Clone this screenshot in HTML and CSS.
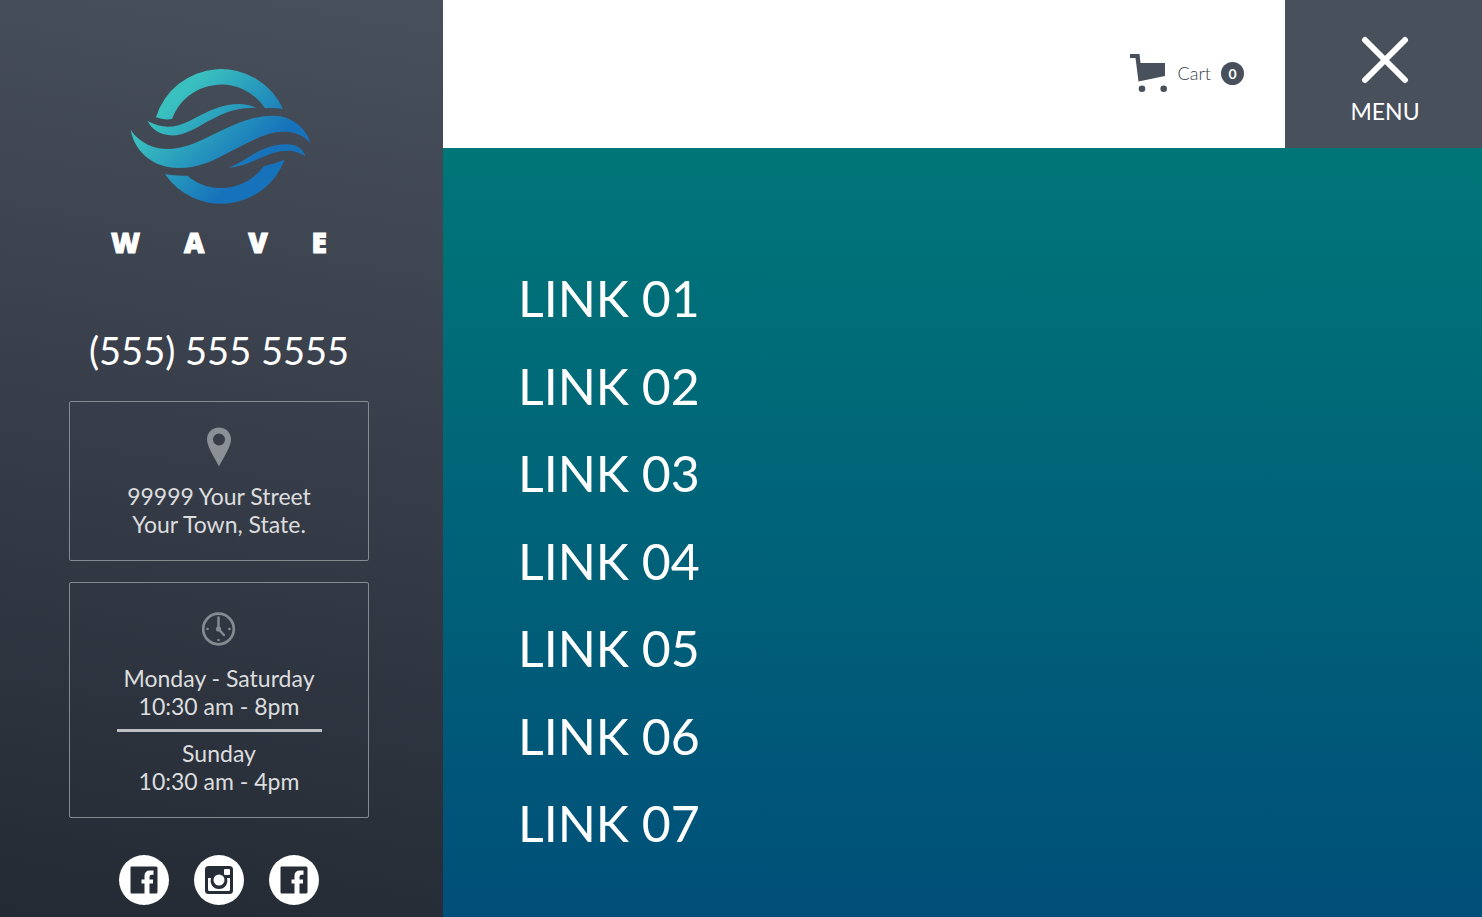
FILE: index.html
```html
<!DOCTYPE html>
<html lang="en">
<head>
    <meta charset="utf-8">
    <meta name="viewport" content="width=device-width, initial-scale=1">
    <title>Wave</title>
    <link rel="stylesheet" href="styles.css">
</head>
<body>
    <div class="page">
        <aside class="sidebar">
            <a href="#" class="logo">
                <svg class="logo-mark" viewBox="81 54 552 408" aria-hidden="true">
                    <defs>
                        <linearGradient id="wave" gradientUnits="userSpaceOnUse" x1="200" y1="180" x2="410" y2="390">
                            <stop offset="0" stop-color="#39c0bf"/>
                            <stop offset="1" stop-color="#1672bb"/>
                        </linearGradient>
                    </defs>
                    <g fill="url(#wave)">
                        <path d="M168 202A204 204 0 0 1 549 177Q522 173 495 175A157 157 0 0 0 216 207Q190 211 168 202Z"/>
                        <path d="M195 373A204 204 0 0 0 554 329Q525 341 491 349A157 157 0 0 1 262 377Q225 378 195 373Z"/>
                        <path d="M143 213C185 237 225 235 270 212C330 180 370 161 420 162Q450 164 468 173C420 172 380 182 320 216C270 245 245 258 210 256C180 254 155 238 143 213Z"/>
                        <path d="M92 240C120 280 160 297 205 297C270 297 330 255 400 226C440 208 480 197 520 197C575 198 615 230 632 279C605 252 580 245 550 245C500 245 450 275 400 300C340 332 300 354 235 354C165 354 105 310 92 240Z"/>
                        <path d="M386 353C440 335 480 283 560 283C590 283 608 295 616 319C590 300 565 300 540 304C480 318 450 347 386 353Z"/>
                    </g>
                </svg>
                <span class="logo-name"><span>W</span><span>A</span><span>V</span><span>E</span></span>
            </a>

            <a href="tel:5555555555" class="phone">(555) 555 5555</a>

            <div class="info-box address">
                <svg width="26" height="40" viewBox="0 0 26 40" aria-hidden="true">
                    <path fill="#8b8f96" fill-rule="evenodd" d="M13 0.500C6 0.500 1 5.500 1 12.500C1 19 7.500 29 13 39.500C18.500 29 25 19 25 12.500C25 5.500 20 0.500 13 0.500ZM13 6.500A6 6 0 1 1 13 18.500A6 6 0 1 1 13 6.500Z"/>
                </svg>
                <p>99999 Your Street<br>Your Town, State.</p>
            </div>

            <div class="info-box hours">
                <svg width="34" height="34" viewBox="0 0 34 34" aria-hidden="true">
                    <circle cx="16.500" cy="17" r="15.300" fill="none" stroke="#868b91" stroke-width="2.700"/>
                    <path d="M16.500 5.500V17L22 23" fill="none" stroke="#868b91" stroke-width="2.400" stroke-linecap="round"/>
                    <g fill="#868b91">
                        <circle cx="16.500" cy="17" r="2.600"/>
                        <circle cx="5.500" cy="17" r="1.300"/>
                        <circle cx="27.500" cy="17" r="1.300"/>
                        <circle cx="16.500" cy="28" r="1.300"/>
                    </g>
                </svg>
                <p>Monday - Saturday<br>10:30 am - 8pm</p>
                <hr>
                <p>Sunday<br>10:30 am - 4pm</p>
            </div>

            <div class="social">
                <a href="#" aria-label="Facebook">
                    <svg viewBox="0 0 50 50">
                        <path fill="#272d37" d="M12.500 11.500H37Q38.500 11.500 38.500 13V37Q38.500 38.500 37 38.500H30.500V28.500H34V24.500H30.500V22Q30.500 19.800 32.500 19.800H34.500V15.500H31Q25.500 15.500 25.500 21V24.500H22.500V28.500H25.500V38.500H12.500Q11.500 38.500 11.500 37V12.500Q11.500 11.500 12.500 11.500Z"/>
                    </svg>
                </a>
                <a href="#" aria-label="Instagram">
                    <svg viewBox="0 0 50 50">
                        <rect x="11" y="11" width="28" height="28" rx="3.500" fill="#272d37"/>
                        <path fill="#fff" d="M14 23H17C15.500 29 19 34 25 34S34.500 29 33 23H36V34.500Q36 36 34.500 36H15.500Q14 36 14 34.500Z"/>
                        <circle cx="25" cy="25" r="5.500" fill="#fff"/>
                        <rect x="30" y="14" width="6" height="6" rx="1" fill="#fff"/>
                    </svg>
                </a>
                <a href="#" aria-label="Facebook">
                    <svg viewBox="0 0 50 50">
                        <path fill="#272d37" d="M12.500 11.500H37Q38.500 11.500 38.500 13V37Q38.500 38.500 37 38.500H30.500V28.500H34V24.500H30.500V22Q30.500 19.800 32.500 19.800H34.500V15.500H31Q25.500 15.500 25.500 21V24.500H22.500V28.500H25.500V38.500H12.500Q11.500 38.500 11.500 37V12.500Q11.500 11.500 12.500 11.500Z"/>
                    </svg>
                </a>
            </div>
        </aside>

        <div class="content">
            <header class="header">
                <a href="#" class="cart">
                    <svg width="38" height="38" viewBox="0 0 38 38" fill="#48505c" aria-hidden="true">
                        <path d="M0 0H9.500L10.500 9H35V22L8.500 27.500L5.500 4H0Z"/>
                        <circle cx="12" cy="34.700" r="3.300"/>
                        <circle cx="33.700" cy="34.700" r="3.300"/>
                    </svg>
                    <span class="cart-label">Cart</span>
                    <span class="cart-count">0</span>
                </a>
                <button type="button" class="menu-button">
                    <svg width="48" height="48" viewBox="0 0 48 48" aria-hidden="true">
                        <path d="M4 4L44 44M44 4L4 44" stroke="#fff" stroke-width="6" stroke-linecap="round"/>
                    </svg>
                    MENU
                </button>
            </header>

            <nav class="menu">
                <ul>
                    <li><a href="#">LINK 01</a></li>
                    <li><a href="#">LINK 02</a></li>
                    <li><a href="#">LINK 03</a></li>
                    <li><a href="#">LINK 04</a></li>
                    <li><a href="#">LINK 05</a></li>
                    <li><a href="#">LINK 06</a></li>
                    <li><a href="#">LINK 07</a></li>
                </ul>
            </nav>
        </div>
    </div>
</body>
</html>
```
FILE: styles.css
```css
* {
    box-sizing: border-box;
}
body {
    margin: 0;
    font-family: Lato, sans-serif;
    color: #fff;
}
a {
    color: inherit;
    text-decoration: none;
}
p {
    margin: 0;
}
.page {
    display: grid;
    grid-template-columns: 443px 1fr;
    min-height: 100vh;
}

/* sidebar */
.sidebar {
    display: flex;
    flex-direction: column;
    align-items: center;
    padding: 68px 5px 12px 0;
    background: linear-gradient(190deg, #48505c, #242a34);
}
.logo {
    display: flex;
    flex-direction: column;
    align-items: center;
}
.logo-mark {
    width: 184px;
    height: 136px;
}
.logo-name {
    display: flex;
    justify-content: space-between;
    width: 216px;
    margin-top: 24px;
    font-family: "Open Sans", sans-serif;
    font-size: 28px;
    font-weight: 800;
    line-height: 28px;
    -webkit-text-stroke: 1px #fff;
}
.phone {
    margin: 71px 0 28px;
    font-size: 38px;
    line-height: 46px;
}
.info-box {
    display: flex;
    flex-direction: column;
    align-items: center;
    width: 300px;
    border: 1px solid #858990;
    border-radius: 2px;
    font-size: 23px;
    line-height: 28px;
    text-align: center;
    color: #dcdddf;
}
.address {
    padding: 25px 0 22px;
    margin-bottom: 21px;
}
.address svg {
    margin-bottom: 15px;
}
.hours {
    padding: 29px 0 22px;
}
.hours svg {
    margin-bottom: 18px;
}
.hours hr {
    width: 205px;
    height: 3px;
    margin: 9px 0 7px;
    border: 0;
    background: #bdbfc3;
}
.social {
    display: flex;
    gap: 25px;
    margin-top: 37px;
}
.social a {
    width: 50px;
    height: 50px;
    border-radius: 50%;
    background: #fff;
}
.social svg {
    display: block;
}

/* main column */
.content {
    display: flex;
    flex-direction: column;
}
.header {
    display: flex;
    justify-content: flex-end;
    height: 148px;
    background: #fff;
}
.cart {
    display: flex;
    align-items: center;
    margin-right: 41px;
    padding-bottom: 2px;
    font-size: 18px;
    color: #48505c;
}
.cart-label {
    margin: 0 10px;
    font-weight: 300;
    color: #363d48;
}
.cart-count {
    width: 23px;
    border-radius: 12px;
    background: #48505c;
    color: #fff;
    font-size: 14px;
    font-weight: 700;
    line-height: 23px;
    text-align: center;
}
.menu-button {
    display: flex;
    flex-direction: column;
    align-items: center;
    width: 197px;
    padding: 36px 0 0 3px;
    border: 0;
    background: #48505c;
    color: #fff;
    font-family: inherit;
    font-size: 23px;
    line-height: 28px;
    cursor: pointer;
}
.menu-button svg {
    margin-bottom: 13px;
}
.menu {
    flex: 1;
    padding: 107px 75px 40px;
    background: linear-gradient(#007678, #004f79);
}
.menu ul {
    margin: 0;
    padding: 0;
    list-style: none;
}
.menu li {
    font-size: 50px;
    line-height: 1.75;
}
```
